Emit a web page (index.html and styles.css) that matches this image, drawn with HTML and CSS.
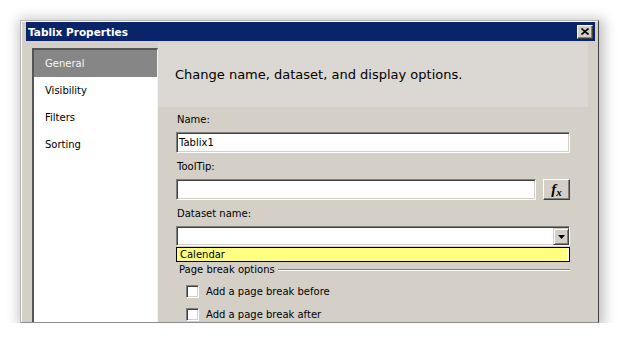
FILE: index.html
```html
<!DOCTYPE html>
<html lang="en">
<head>
    <meta charset="UTF-8">
    <title>Tablix Properties</title>
    <link rel="stylesheet" href="styles.css">
</head>
<body>
    <div class="window">
        <div class="titlebar">
            <span class="title">Tablix Properties</span>
            <span class="close-btn">
                <svg width="8" height="7" viewBox="0 0 8 7"><path d="M0.5 0.5 L7.5 6.5 M7.5 0.5 L0.5 6.5" stroke="#000" stroke-width="1.7" fill="none"/></svg>
            </span>
        </div>

        <div class="dialog-body">
            <ul class="nav">
                <li class="active">General</li>
                <li>Visibility</li>
                <li>Filters</li>
                <li>Sorting</li>
            </ul>

            <div class="content">
                <div class="page-header">
                    <h1>Change name, dataset, and display options.</h1>
                </div>

                <div class="form">
                    <label class="field-label">Name:</label>
                    <div class="textbox">Tablix1</div>

                    <label class="field-label">ToolTip:</label>
                    <div class="field-row">
                        <div class="textbox short"></div>
                        <span class="fx-btn"><span class="fx-f">f</span><span class="fx-x">x</span></span>
                    </div>

                    <label class="field-label">Dataset name:</label>
                    <div class="combo">
                        <span class="combo-btn">
                            <svg width="7" height="4" viewBox="0 0 7 4"><path d="M0 0 H7 L3.5 4 Z" fill="#000"/></svg>
                        </span>
                    </div>
                    <div class="dropdown-list">Calendar</div>

                    <div class="group-title">
                        <span>Page break options</span>
                        <span class="etched"></span>
                    </div>
                    <div class="check-row first"><span class="checkbox"></span>Add a page break before</div>
                    <div class="check-row"><span class="checkbox"></span>Add a page break after</div>
                </div>
            </div>
        </div>
    </div>
</body>
</html>
```

FILE: styles.css
```css
body {
    margin: 0;
    padding: 20px 0 0 20px;
    background: #fff;
    font-family: "DejaVu Sans", Tahoma, sans-serif;
    font-size: 10px;
    color: #000;
}
.window {
    width: 579px;
    height: 303px;
    box-sizing: border-box;
    display: flex;
    flex-direction: column;
    overflow: hidden;
    background: #d4d0c8;
    border: 1px solid #b5b5b5;
    border-right-color: #404040;
    border-bottom-color: #8c8c8c;
    padding: 1px 3px 0 5px;
    box-shadow: inset 1px 1px #fff, 2px 2px 12px 3px rgba(0,0,0,0.25);
}
.titlebar {
    flex-shrink: 0;
    height: 19px;
    display: flex;
    align-items: center;
    justify-content: space-between;
    padding: 0 2px;
    background: #0a246a;
    color: #fff;
    font-weight: bold;
}
.title {
    font-size: 10.5px;
}
.close-btn {
    width: 16px;
    height: 14px;
    box-sizing: border-box;
    display: flex;
    align-items: center;
    justify-content: center;
    background: #d4d0c8;
    border: 1px solid;
    border-color: #fff #404040 #404040 #fff;
    box-shadow: inset -1px -1px #808080;
}
.dialog-body {
    flex: 1;
    display: flex;
    min-height: 0;
    padding-top: 2px;
}
.nav {
    list-style: none;
    margin: 5px 0 0 6px;
    padding: 0;
    width: 126px;
    box-sizing: border-box;
    background: #fff;
    border-top: 2px solid #555;
    border-left: 2px solid #555;
    border-right: 1px solid #f4f4f4;
}
.nav li {
    height: 27px;
    line-height: 27px;
    padding-left: 11px;
}
.nav li.active {
    background: #868686;
    color: #f6f6f6;
}
.content {
    flex: 1;
    padding: 0 25px 0 18px;
}
.page-header {
    height: 64px;
    box-sizing: border-box;
    margin: 0 -18px;
    padding: 24px 0 0 17px;
    background: #dbd8d3;
}
.page-header h1 {
    margin: 0;
    font-size: 13px;
    font-weight: normal;
    line-height: 16px;
}
.form {
    padding-top: 6px;
}
.field-label {
    display: block;
    height: 13px;
    line-height: 13px;
    margin: 0 0 6px 1px;
}
.textbox {
    height: 21px;
    box-sizing: border-box;
    margin-bottom: 7px;
    padding-left: 2px;
    line-height: 19px;
    background: #fff;
    border: 1px solid;
    border-color: #808080 #fff #fff #808080;
    box-shadow: inset 1px 1px #404040, inset -1px -1px #d4d0c8;
}
.field-row {
    display: flex;
    gap: 7px;
    margin-bottom: 7px;
}
.field-row .textbox {
    flex: 1;
    margin-bottom: 0;
}
.fx-btn {
    width: 27px;
    height: 21px;
    box-sizing: border-box;
    display: flex;
    align-items: center;
    justify-content: center;
    background: #d4d0c8;
    border: 1px solid;
    border-color: #fff #404040 #404040 #fff;
    box-shadow: inset -1px -1px #808080;
    font-family: "Liberation Serif", serif;
    font-style: italic;
    font-weight: bold;
}
.fx-f {
    font-size: 15px;
    line-height: 15px;
}
.fx-x {
    font-size: 11px;
    line-height: 11px;
    margin-top: 5px;
}
.combo {
    height: 20px;
    box-sizing: border-box;
    display: flex;
    justify-content: flex-end;
    padding: 1px 0;
    background: #fff;
    border: 1px solid;
    border-color: #808080 #fff #fff #808080;
    box-shadow: inset 1px 1px #404040, inset -1px -1px #d4d0c8;
}
.combo-btn {
    width: 16px;
    height: 17px;
    box-sizing: border-box;
    display: flex;
    align-items: center;
    justify-content: center;
    background: #d4d0c8;
    border: 1px solid;
    border-color: #d4d0c8 #404040 #404040 #d4d0c8;
    box-shadow: inset 1px 1px #fff, inset -1px -1px #808080;
}
.dropdown-list {
    height: 15px;
    box-sizing: border-box;
    margin-top: 1px;
    padding-left: 3px;
    line-height: 13px;
    background: #ffff80;
    border: 1px solid #000;
    box-shadow: inset -2px 0 #fff;
}
.group-title {
    display: flex;
    align-items: center;
    height: 13px;
    line-height: 13px;
    margin-top: 1px;
    padding-left: 3px;
}
.etched {
    flex: 1;
    margin-left: 3px;
    border-top: 1px solid #808080;
    border-bottom: 1px solid #fff;
}
.check-row {
    display: flex;
    align-items: center;
    gap: 7px;
    height: 13px;
    margin: 10px 0 0 10px;
}
.check-row.first {
    margin-top: 9px;
}
.checkbox {
    width: 13px;
    height: 13px;
    box-sizing: border-box;
    background: #fff;
    border: 1px solid;
    border-color: #808080 #fff #fff #808080;
    box-shadow: inset 1px 1px #404040, inset -1px -1px #d4d0c8;
}
```
